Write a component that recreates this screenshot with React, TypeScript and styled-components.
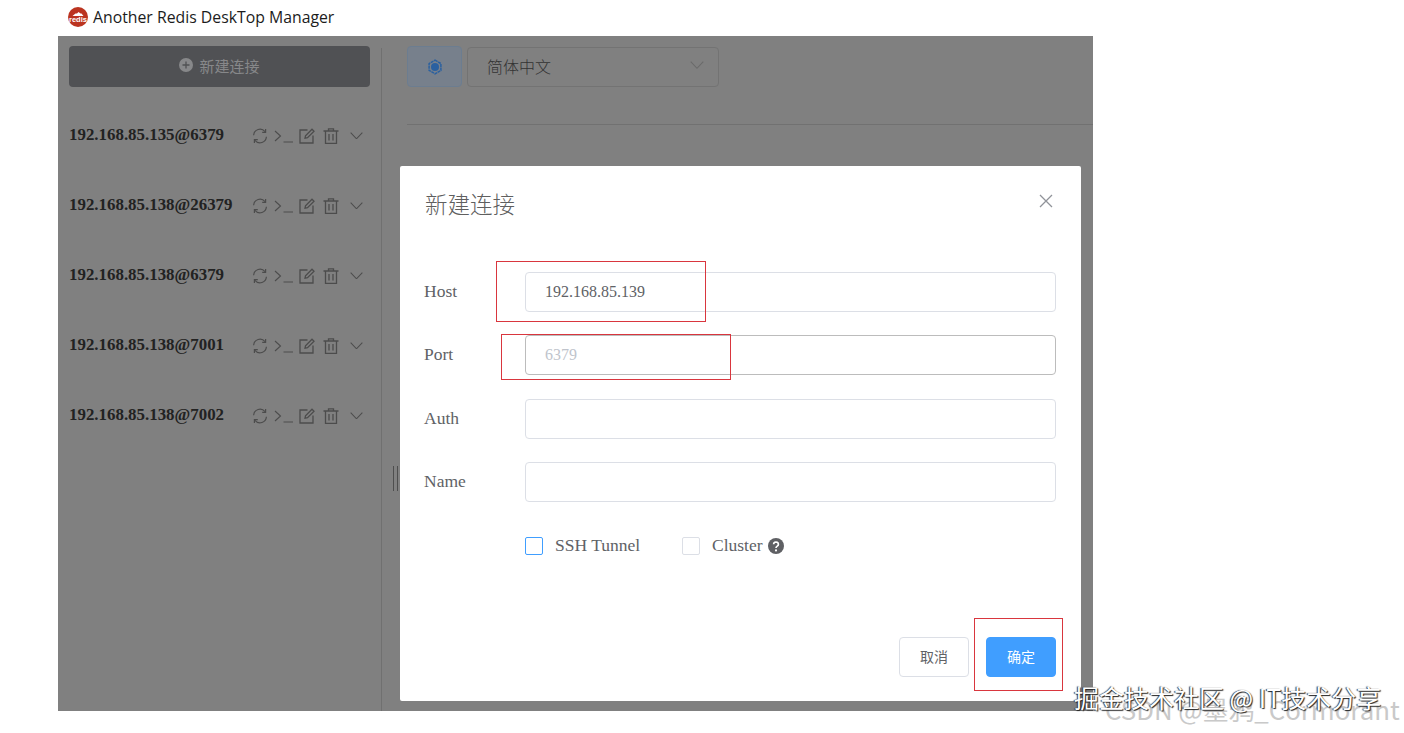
import { createGlobalStyle, styled } from 'styled-components';

const SERIF = '"Liberation Serif", "Noto Sans CJK SC", serif';
const CJK = '"Noto Sans CJK SC", "Liberation Sans", sans-serif';

const GlobalStyle = createGlobalStyle`
  html, body {
    margin: 0;
    padding: 0;
    background: #fff;
  }
  * {
    box-sizing: border-box;
  }
`;

const Page = styled.div`
  position: relative;
  width: 1404px;
  height: 733px;
  padding-left: 58px;
  overflow: hidden;
  background: #fff;
`;

const Window = styled.div`
  position: relative;
  display: flex;
  flex-direction: column;
  width: 1035px;
  height: 711px;
`;

const TitleBar = styled.div`
  display: flex;
  align-items: center;
  gap: 5px;
  height: 36px;
  padding: 0 0 2px 10px;
  background: #fff;
  color: #1c1c1c;
  font: 15.8px "Open Sans", "Noto Sans", sans-serif;
`;

const Body = styled.div`
  position: relative;
  display: flex;
  flex: 1;
  background: #808080;
`;

const Sidebar = styled.aside`
  width: 323px;
  padding: 10px 11px 0 11px;
`;

const NewButton = styled.div`
  display: flex;
  align-items: center;
  justify-content: center;
  gap: 6px;
  height: 41px;
  padding-bottom: 3px;
  border-radius: 4px;
  background: #505154;
  color: #87888a;
  font: 15px ${CJK};
`;

const ConnectionList = styled.div`
  margin-top: 13px;
`;

const ConnectionRow = styled.div`
  display: flex;
  align-items: center;
  justify-content: space-between;
  height: 70px;
`;

const ConnectionName = styled.span`
  color: #222;
  font: bold 16.9px ${SERIF};
  white-space: nowrap;
`;

const RowIcons = styled.div`
  position: absolute;
  left: 194px;
  display: flex;
  align-items: center;
  margin-top: 1px;
  color: #4c4c4c;
`;

const IconSlot = styled.span<{ $width: number }>`
  display: flex;
  width: ${({ $width }) => $width}px;
`;

const Divider = styled.div`
  width: 1px;
  margin-top: 12px;
  background: #707070;
`;

const Main = styled.main`
  flex: 1;
  padding: 10px 0 0 25px;
`;

const Toolbar = styled.div`
  display: flex;
  gap: 5px;
  height: 40px;
`;

const ThemeButton = styled.div`
  display: flex;
  align-items: center;
  justify-content: center;
  width: 55px;
  height: 41px;
  border: 1px solid #6c7d90;
  border-radius: 4px;
  background: #77808c;
`;

const LangSelect = styled.div`
  display: flex;
  align-items: center;
  justify-content: space-between;
  width: 252px;
  height: 40px;
  margin-top: 1px;
  padding: 0 14px 3px 19px;
  border: 1px solid #737373;
  border-radius: 4px;
  color: #333;
  font: 300 16px ${CJK};
`;

const Rule = styled.div`
  height: 1px;
  margin-top: 38px;
  background: #717171;
`;

const Splitter = styled.div`
  position: absolute;
  left: 335px;
  top: 430px;
  width: 5px;
  height: 25px;
  border-left: 1px solid #4e4e4e;
  border-right: 1px solid #4e4e4e;
`;

const Modal = styled.div`
  position: absolute;
  left: 342px;
  top: 166px;
  display: flex;
  flex-direction: column;
  width: 681px;
  height: 535px;
  padding: 24px 25px;
  border-radius: 2px;
  background: #fff;
`;

const ModalHeader = styled.div`
  display: flex;
  justify-content: space-between;
  height: 82px;
`;

const ModalTitle = styled.h2`
  margin: -2px 0 0;
  color: #5f5f5f;
  font: 300 22.5px/30px ${CJK};
`;

const CloseIcon = styled.svg`
  margin: 4px 3px 0 0;
`;

const Form = styled.div`
  display: flex;
  flex-direction: column;
  gap: 23.4px;
`;

const FormRow = styled.div`
  display: flex;
  align-items: center;
  height: 40px;
`;

const Label = styled.label`
  width: 100px;
  margin: -1px 1px 0 -1px;
  color: #606266;
  font: 17.5px ${SERIF};
`;

const Input = styled.div<{ $placeholder?: boolean; $strong?: boolean }>`
  display: flex;
  align-items: center;
  flex: 1;
  height: 40px;
  padding-left: 19px;
  border: 1px solid ${({ $strong }) => ($strong ? '#bcbcbc' : '#dcdfe6')};
  border-radius: 4px;
  color: ${({ $placeholder }) => ($placeholder ? '#c0c4cc' : '#606266')};
  font: 16px ${SERIF};
`;

const OptionRow = styled(FormRow)`
  padding-left: 100px;
`;

const Check = styled.span<{ $active?: boolean }>`
  width: 18px;
  height: 18px;
  border: 1px solid ${({ $active }) => ($active ? '#409eff' : '#dcdfe6')};
  border-radius: 2px;
`;

const OptionText = styled.span<{ $width: number }>`
  width: ${({ $width }) => $width}px;
  margin-left: 12px;
  color: #606266;
  font: 17.5px ${SERIF};
  white-space: nowrap;
`;

const Footer = styled.div`
  display: flex;
  justify-content: flex-end;
  gap: 17px;
  margin-top: auto;
`;

const DialogButton = styled.div<{ $primary?: boolean }>`
  display: flex;
  align-items: center;
  justify-content: center;
  width: 70px;
  height: 40px;
  padding-bottom: 3px;
  border: 1px solid ${({ $primary }) => ($primary ? '#409eff' : '#dcdfe6')};
  border-radius: 4px;
  background: ${({ $primary }) => ($primary ? '#409eff' : '#fff')};
  color: ${({ $primary }) => ($primary ? '#fff' : '#606266')};
  font: 14px ${CJK};
`;

const RedBox = styled.div<{ $x: number; $y: number; $w: number; $h: number }>`
  position: absolute;
  left: ${({ $x }) => $x}px;
  top: ${({ $y }) => $y}px;
  width: ${({ $w }) => $w}px;
  height: ${({ $h }) => $h}px;
  border: 1px solid #d9363e;
`;

const WatermarkBack = styled.div`
  position: absolute;
  left: 1105px;
  top: 692px;
  color: #c9c9c9;
  font: 25.8px/34px ${CJK};
  white-space: nowrap;
`;

const WatermarkFront = styled.div`
  position: absolute;
  left: 1074px;
  top: 682px;
  color: #fff;
  font: 25px/30px ${CJK};
  text-shadow: 1px 1px 1px #222, -1px 0 1px #333;
  white-space: nowrap;
`;

const connections = [
  '192.168.85.135@6379',
  '192.168.85.138@26379',
  '192.168.85.138@6379',
  '192.168.85.138@7001',
  '192.168.85.138@7002',
];

const fields = [
  { label: 'Host', value: '192.168.85.139' },
  { label: 'Port', value: '6379', placeholder: true, strong: true },
  { label: 'Auth', value: '' },
  { label: 'Name', value: '' },
];

const Logo = () => (
  <svg width="20" height="20" viewBox="0 0 20 20">
    <circle cx="10" cy="10" r="10" fill="#bb3420" />
    <path d="M4.500 9 7.500 6.500H9L10.500 5l2 1.500h1L15.500 9z" fill="#fff" />
    <text x="10" y="14.500" textAnchor="middle" fontSize="7.500" fontWeight="700" fontFamily="Liberation Sans, sans-serif" fill="#fff">
      redis
    </text>
  </svg>
);

const PlusCircle = () => (
  <svg width="14" height="14" viewBox="0 0 14 14">
    <circle cx="7" cy="7" r="7" fill="#87888a" />
    <path d="M7 3.500v7M3.500 7h7" stroke="#505154" strokeWidth="1.300" />
  </svg>
);

const RefreshIcon = () => (
  <svg width="16" height="16" viewBox="0 0 16 16" fill="none" stroke="currentColor" strokeWidth="1.200">
    <path d="M1.600 7.200A6.400 6.400 0 0 1 13 3.600M14.400 8.800A6.400 6.400 0 0 1 3 12.400" />
    <path d="M13.600 1v3.400h-3.400M2.400 15v-3.400h3.400" />
  </svg>
);

const TerminalIcon = () => (
  <svg width="20" height="14" viewBox="0 0 20 14" fill="none" stroke="currentColor" strokeWidth="1.100">
    <path d="M1 2 6.500 7 1 12M9.500 13H19" />
  </svg>
);

const EditIcon = () => (
  <svg width="16" height="16" viewBox="0 0 16 16" fill="none" stroke="currentColor" strokeWidth="1.300">
    <path d="M8.500 2H1v13h13V7.500" />
    <path d="M13 1.200 15 3.200 8.500 9.700 6 10.200 6.500 7.700z" />
  </svg>
);

const TrashIcon = () => (
  <svg width="16" height="16" viewBox="0 0 16 16" fill="none" stroke="currentColor" strokeWidth="1.300">
    <path d="M0.500 3h15M5.500 3V0.800h5V3M2.500 3v12.300h11V3M6 6v6.500M10 6v6.500" />
  </svg>
);

const ChevronIcon = ({ color = 'currentColor', width = 13 }: { color?: string; width?: number }) => (
  <svg width={width} height={width * 0.6} viewBox="0 0 14 8.400" fill="none" stroke={color} strokeWidth="1.100">
    <path d="M0.700 0.700 7 7.300 13.300 0.700" />
  </svg>
);

const ThemeIcon = () => (
  <svg width="16" height="16" viewBox="0 0 16 16">
    <path d="M8 1.200 13.900 4.600v6.800L8 14.800 2.100 11.400V4.600z" fill="none" stroke="#2a60a0" strokeWidth="1.500" strokeDasharray="3 .6" />
    <circle cx="8" cy="8" r="4" fill="#2a60a0" />
  </svg>
);

const HelpIcon = () => (
  <svg width="16" height="16" viewBox="0 0 16 16">
    <circle cx="8" cy="8" r="8" fill="#5f6064" />
    <path d="M5.600 6.200a2.400 2.200 0 1 1 3.700 1.900c-.9.600-1.300 1-1.300 1.900" fill="none" stroke="#fff" strokeWidth="1.700" />
    <circle cx="8" cy="12.400" r="1.050" fill="#fff" />
  </svg>
);

export default function App() {
  return (
    <Page>
      <GlobalStyle />
      <Window>
        <TitleBar>
          <Logo />
          Another Redis DeskTop Manager
        </TitleBar>
        <Body>
          <Sidebar>
            <NewButton>
              <PlusCircle />
              新建连接
            </NewButton>
            <ConnectionList>
              {connections.map((name) => (
                <ConnectionRow key={name}>
                  <ConnectionName>{name}</ConnectionName>
                  <RowIcons>
                    <IconSlot $width={22}><RefreshIcon /></IconSlot>
                    <IconSlot $width={25}><TerminalIcon /></IconSlot>
                    <IconSlot $width={24}><EditIcon /></IconSlot>
                    <IconSlot $width={27}><TrashIcon /></IconSlot>
                    <IconSlot $width={13}><ChevronIcon /></IconSlot>
                  </RowIcons>
                </ConnectionRow>
              ))}
            </ConnectionList>
          </Sidebar>
          <Divider />
          <Main>
            <Toolbar>
              <ThemeButton>
                <ThemeIcon />
              </ThemeButton>
              <LangSelect>
                简体中文
                <ChevronIcon color="#6a6a6a" width={14} />
              </LangSelect>
            </Toolbar>
            <Rule />
          </Main>
          <Splitter />
        </Body>
        <Modal>
          <ModalHeader>
            <ModalTitle>新建连接</ModalTitle>
            <CloseIcon width="14" height="14" viewBox="0 0 14 14" fill="none" stroke="#909399" strokeWidth="1.300">
              <path d="M1 1l12 12M13 1 1 13" />
            </CloseIcon>
          </ModalHeader>
          <Form>
            {fields.map((field) => (
              <FormRow key={field.label}>
                <Label>{field.label}</Label>
                <Input $placeholder={field.placeholder} $strong={field.strong}>
                  {field.value}
                </Input>
              </FormRow>
            ))}
            <OptionRow>
              <Check $active />
              <OptionText $width={127}>SSH Tunnel</OptionText>
              <Check />
              <OptionText $width={56}>Cluster</OptionText>
              <HelpIcon />
            </OptionRow>
          </Form>
          <Footer>
            <DialogButton>取消</DialogButton>
            <DialogButton $primary>确定</DialogButton>
          </Footer>
        </Modal>
      </Window>
      <RedBox $x={496} $y={261} $w={210} $h={61} />
      <RedBox $x={501} $y={334} $w={230} $h={46} />
      <RedBox $x={974} $y={618} $w={89} $h={73} />
      <WatermarkBack>CSDN @墨鸦_Cormorant</WatermarkBack>
      <WatermarkFront>掘金技术社区 @ IT技术分享</WatermarkFront>
    </Page>
  );
}
